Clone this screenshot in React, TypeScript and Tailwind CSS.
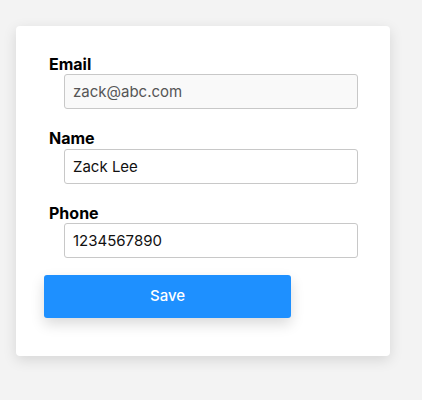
const fields: { label: string; value: string; disabled?: boolean }[] = [
  { label: "Email", value: "zack@abc.com", disabled: true },
  { label: "Name", value: "Zack Lee" },
  { label: "Phone", value: "1234567890" },
];

export default function App() {
  return (
    <div className="min-h-[400px] bg-[#f3f3f3] pl-4 pt-[26px] font-['Inter',sans-serif]">
      <form
        onSubmit={(e) => e.preventDefault()}
        className="w-[374px] rounded bg-white px-[28px] pb-[38px] pt-[29px] shadow-[0_4px_14px_rgba(0,0,0,0.12)]"
      >
        <div className="flex flex-col gap-5">
          {fields.map((f) => (
            <div key={f.label}>
              <label className="ml-[5px] block text-base font-bold leading-[19.4px] text-black">{f.label}</label>
              <input
                type="text"
                defaultValue={f.value}
                disabled={f.disabled}
                className="ml-[20px] block h-[35px] w-[294px] rounded-[3px] border border-[#c8c8c8] bg-white px-[8px] text-[15px] text-[#111] disabled:bg-[#f9f9f9] disabled:text-[#555]"
              />
            </div>
          ))}
        </div>
        <button
          type="submit"
          className="mt-[17px] h-[43px] w-[247px] rounded-[3px] bg-[#1e90ff] text-[15px] font-medium text-white shadow-[0_6px_14px_rgba(0,0,0,0.15)]"
        >
          Save
        </button>
      </form>
    </div>
  );
}
